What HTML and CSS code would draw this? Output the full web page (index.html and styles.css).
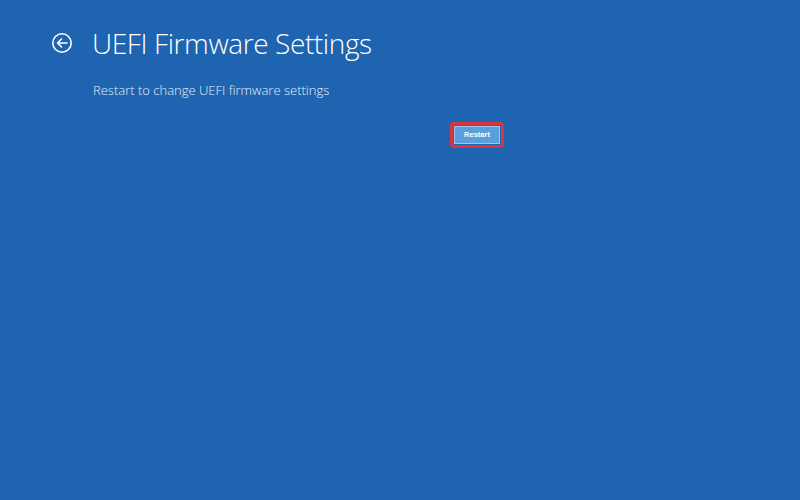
FILE: index.html
```html
<!DOCTYPE html>
<html>
<head>
<meta charset="utf-8">
<link rel="stylesheet" href="styles.css">
</head>
<body>
<div class="page">
  <header class="header">
    <svg class="back" width="22" height="22" viewBox="0 0 22 22">
      <circle cx="11" cy="11" r="9.2" fill="none" stroke="#ffffff" stroke-width="1.6"/>
      <path d="M16 11H6.5M10.5 7L6.5 11L10.5 15" fill="none" stroke="#ffffff" stroke-width="1.6" stroke-linecap="round" stroke-linejoin="round"/>
    </svg>
    <h1 class="title">UEFI Firmware Settings</h1>
  </header>
  <p class="desc">Restart to change UEFI firmware settings</p>
  <div class="actions">
    <span class="highlight"><button class="btn">Restart</button></span>
  </div>
</div>
</body>
</html>
```
FILE: styles.css
```css
html, body {
  margin: 0;
  padding: 0;
  width: 800px;
  height: 500px;
  background: #1e64b0;
  overflow: hidden;
}
.page {
  padding: 24px 0 0 51px;
  font-family: "Open Sans", "Liberation Sans", sans-serif;
  color: #ffffff;
}
.header {
  display: flex;
  align-items: center;
  gap: 19px;
}
.back {
  display: block;
  margin-top: 0;
}
.title {
  margin: 0;
  font-size: 28px;
  font-weight: 300;
  line-height: 38px;
  letter-spacing: -0.4px;
}
.desc {
  margin: 19px 0 0 42px;
  font-size: 13px;
  font-weight: 300;
  line-height: 18px;
  color: #e8f0fa;
}
.actions {
  margin: 23px 0 0 399px;
  display: flex;
}
.highlight {
  display: inline-flex;
  padding: 1px;
  border: 3px solid #d9353f;
  border-radius: 4px;
  background: #1e64b0;
}
.btn {
  width: 46px;
  height: 18px;
  padding: 0;
  border: 1px solid #9cc6ec;
  background: #5a9fdb;
  color: #ffffff;
  font-family: "Liberation Sans", sans-serif;
  font-size: 7.5px;
  font-weight: bold;
  line-height: 16px;
}
```
